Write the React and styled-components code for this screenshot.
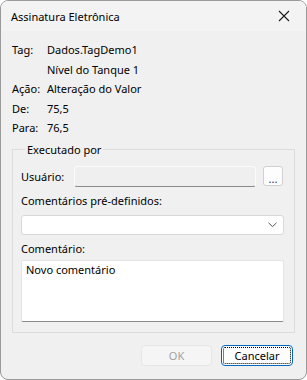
import React from "react";
import styled, { createGlobalStyle } from "styled-components";

const GlobalStyle = createGlobalStyle`
  html, body {
    margin: 0;
    padding: 0;
    background: #ffffff;
  }
  * {
    box-sizing: border-box;
  }
`;

const Window = styled.div`
  width: 307px;
  height: 380px;
  display: flex;
  flex-direction: column;
  border: 1px solid #9a9a9a;
  border-radius: 8px;
  overflow: hidden;
  background: #f0f0f0;
  font-family: "Noto Sans", "Liberation Sans", sans-serif;
  font-size: 11px;
  color: #000;
`;

const TitleBar = styled.div`
  height: 30px;
  flex: none;
  display: flex;
  align-items: center;
  justify-content: space-between;
  padding: 0 16px 0 10px;
  background: #f3f3f3;
`;

const Title = styled.span`
  font-size: 11px;
`;

const Body = styled.div`
  flex: 1;
  display: flex;
  flex-direction: column;
  padding: 9px 11px 0 11px;
`;

const InfoGrid = styled.div`
  display: grid;
  grid-template-columns: 35px 1fr;
  grid-auto-rows: 19.5px;
  align-items: center;
`;

const Group = styled.fieldset`
  margin: 4px 0 0 0;
  padding: 4px 10px 10px 8px;
  border: 1px solid #dcdcdc;
  display: flex;
  flex-direction: column;
`;

const Legend = styled.legend`
  padding: 0 2px;
  margin-left: 4px;
  height: 16px;
  line-height: 16px;
`;

const UserRow = styled.div`
  display: flex;
  align-items: center;
  height: 21px;
  margin-top: 4px;
`;

const UserLabel = styled.span`
  width: 53px;
  flex: none;
`;

const TextBox = styled.div`
  width: 182px;
  height: 21px;
  background: #efefef;
  border: 1px solid #fbfbfb;
  border-bottom-color: #8a8a8a;
  border-radius: 3px;
`;

const BrowseButton = styled.button`
  margin-left: 7px;
  width: 20px;
  height: 20px;
  padding: 4px 0 0 0;
  border: 1px solid #d0d0d0;
  border-radius: 3px;
  background: #fdfdfd;
  color: #1a1a80;
  font-family: inherit;
  font-size: 11px;
  line-height: 1;
`;

const FieldLabel = styled.div`
  margin-top: ${(p) => p.$top}px;
  height: 16px;
  line-height: 16px;
`;

const Select = styled.div`
  margin-top: 6px;
  height: 20px;
  background: #ffffff;
  border: 1px solid #d8d8d8;
  border-radius: 3px;
  display: flex;
  align-items: center;
  justify-content: flex-end;
  padding-right: 6px;
`;

const TextArea = styled.div`
  margin-top: 3px;
  height: 62px;
  background: #ffffff;
  border: 1px solid #e4e4e4;
  border-bottom-color: #8a8a8a;
  border-radius: 2px;
  padding: 1px 4px;
`;

const Footer = styled.div`
  display: flex;
  justify-content: flex-end;
  gap: 9px;
  padding: 12px 2px 0 0;
`;

const DialogButton = styled.button`
  width: ${(p) => p.$w}px;
  height: 21px;
  padding: 0;
  border-radius: 4px;
  font-family: inherit;
  font-size: 11px;
  background: ${(p) => (p.disabled ? "#f5f5f5" : "#fdfdfd")};
  color: ${(p) => (p.disabled ? "#a2a2a2" : "#000")};
  border: 1px solid ${(p) => (p.disabled ? "#e6e6e6" : "#0067c0")};
  outline: ${(p) => (p.$focused ? "1px dotted #000" : "none")};
  outline-offset: -3px;
`;

const Chevron = () => (
  <svg width="9" height="6" viewBox="0 0 9 6">
    <path d="M0.5 0.8 L4.5 4.6 L8.5 0.8" fill="none" stroke="#555" strokeWidth="1" />
  </svg>
);

const CloseIcon = () => (
  <svg width="12" height="12" viewBox="0 0 12 12">
    <path d="M1 1 L11 11 M11 1 L1 11" stroke="#1a1a1a" strokeWidth="1.1" />
  </svg>
);

const info = [
  ["Tag:", "Dados.TagDemo1"],
  ["", "Nível do Tanque 1"],
  ["Ação:", "Alteração do Valor"],
  ["De:", "75,5"],
  ["Para:", "76,5"],
];

export default function App() {
  return (
    <>
      <GlobalStyle />
      <Window>
        <TitleBar>
          <Title>Assinatura Eletrônica</Title>
          <CloseIcon />
        </TitleBar>
        <Body>
          <InfoGrid>
            {info.map(([k, v], i) => (
              <React.Fragment key={i}>
                <span>{k}</span>
                <span>{v}</span>
              </React.Fragment>
            ))}
          </InfoGrid>
          <Group>
            <Legend>Executado por</Legend>
            <UserRow>
              <UserLabel>Usuário:</UserLabel>
              <TextBox />
              <BrowseButton>...</BrowseButton>
            </UserRow>
            <FieldLabel $top={6}>Comentários pré-definidos:</FieldLabel>
            <Select>
              <Chevron />
            </Select>
            <FieldLabel $top={6}>Comentário:</FieldLabel>
            <TextArea>Novo comentário</TextArea>
          </Group>
          <Footer>
            <DialogButton $w={71} disabled>
              OK
            </DialogButton>
            <DialogButton $w={72} $focused>
              Cancelar
            </DialogButton>
          </Footer>
        </Body>
      </Window>
    </>
  );
}
